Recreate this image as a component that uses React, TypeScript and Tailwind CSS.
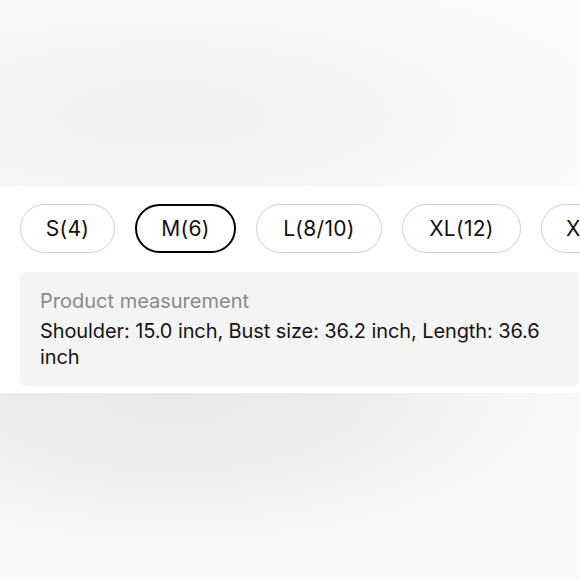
import React from "react";

const sizes = [
  { label: "S(4)", active: false, w: "w-[95px]" },
  { label: "M(6)", active: true, w: "w-[101px]" },
  { label: "L(8/10)", active: false, w: "w-[126px]" },
  { label: "XL(12)", active: false, w: "w-[119px]" },
  { label: "XXL(14)", active: false, w: "w-[130px]" },
];

export default function App() {
  return (
    <div
      className="w-[580px] h-[580px] overflow-hidden flex flex-col bg-white"
      style={{ fontFamily: "Inter, 'Liberation Sans', sans-serif" }}
    >
      <div className="h-[186px] shrink-0 bg-[radial-gradient(ellipse_90%_90%_at_28%_62%,#f1f1f1_0%,#f4f4f4_40%,#fafafa_80%,#fcfcfc_100%)]" />
      <div className="h-[207px] shrink-0 bg-white pt-[18px] overflow-hidden">
        <div className="flex gap-5 pl-5 whitespace-nowrap">
          {sizes.map((s) => (
            <div
              key={s.label}
              className={
                (s.active
                  ? "border-2 border-black "
                  : "border border-[#d0d0d0] ") +
                s.w +
                " h-[49px] shrink-0 flex items-center justify-center rounded-full text-[21px] tracking-[0.3px] text-[#111]"
              }
            >
              {s.label}
            </div>
          ))}
        </div>
        <div className="ml-5 mt-[19px] w-[559px] h-[114px] rounded-md bg-[#f4f4f4] px-5 pt-[15px]">
          <div className="text-[20px] leading-[28px] text-[#8a8a8a]">Product measurement</div>
          <div className="mt-[3px] text-[20px] leading-[26px] tracking-[-0.1px] text-[#151515]">
            Shoulder: 15.0 inch, Bust size: 36.2 inch, Length: 36.6 inch
          </div>
        </div>
      </div>
      <div className="flex-1 bg-[radial-gradient(ellipse_80%_100%_at_30%_0%,#e8e8e8_0%,#eeeeee_40%,#f6f6f6_75%,#fafafa_100%)]" />
    </div>
  );
}
